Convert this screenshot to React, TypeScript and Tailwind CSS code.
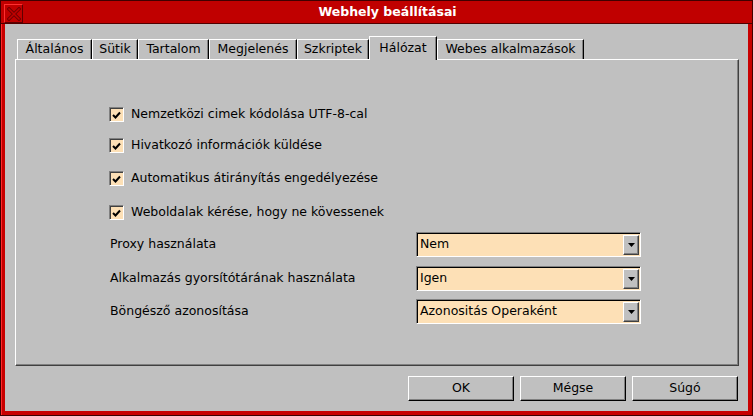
import React from 'react';

const tabs = [
  { label: 'Általános', w: 'w-[75px]' },
  { label: 'Sütik', w: 'w-[46px]' },
  { label: 'Tartalom', w: 'w-[71px]' },
  { label: 'Megjelenés', w: 'w-[88px]' },
  { label: 'Szkriptek', w: 'w-[72px]' },
  { label: 'Hálózat', w: 'w-[68px]', active: true },
  { label: 'Webes alkalmazások', w: 'w-[147px]' },
];

const checks = [
  { label: 'Nemzetközi cimek kódolása UTF-8-cal', mt: 'mt-0' },
  { label: 'Hivatkozó információk küldése', mt: 'mt-[16px]' },
  { label: 'Automatikus átirányítás engedélyezése', mt: 'mt-[18px]' },
  { label: 'Weboldalak kérése, hogy ne kövessenek', mt: 'mt-[19px]' },
];

const selects = [
  { label: 'Proxy használata', value: 'Nem', mt: 'mt-[12px]' },
  { label: 'Alkalmazás gyorsítótárának használata', value: 'Igen', mt: 'mt-[9px]' },
  { label: 'Böngésző azonosítása', value: 'Azonositás Operaként', mt: 'mt-[8px]' },
];

function CloseBox() {
  return (
    <div className="w-[19px] h-[19px] mt-[3px] ml-[3px] border border-t-[#ff3030] border-l-[#ff3030] border-b-[#600000] border-r-[#600000] flex items-center justify-center">
      <svg width={14} height={14} viewBox="0 0 14 14">
        <path d="M2 2 L12 12 M12 2 L2 12" stroke="#700000" strokeWidth={3.5} strokeLinecap="square" />
        <path d="M2 2 L12 12 M12 2 L2 12" stroke="#c00000" strokeWidth={1.5} strokeLinecap="square" />
      </svg>
    </div>
  );
}

function CheckBox() {
  return (
    <div className="w-[15px] h-[15px] bg-[#fde0b6] border border-t-[#808080] border-l-[#808080] border-b-white border-r-white shadow-[inset_1px_1px_0_#404040] flex items-center justify-center">
      <svg width={9} height={8} viewBox="0 0 9 8">
        <path d="M1 4 L3.5 6.5 L8 1.5" stroke="#000" strokeWidth={2} fill="none" />
      </svg>
    </div>
  );
}

function Select({ value }: { value: string }) {
  return (
    <div className="w-[225px] h-[25px] bg-[#fde0b6] border border-t-[#808080] border-l-[#808080] border-b-white border-r-white shadow-[inset_1px_1px_0_#000] flex items-center pl-[3px] pr-px">
      <span className="flex-1">{value}</span>
      <div className="w-[16px] h-[20px] mt-px bg-[#c0c0c0] border border-t-white border-l-white border-b-[#404040] border-r-[#404040] shadow-[inset_-1px_-1px_0_#808080] flex items-center justify-center">
        <svg width={7} height={4} viewBox="0 0 7 4">
          <polygon points="0,0 7,0 3.5,4" fill="#000" />
        </svg>
      </div>
    </div>
  );
}

export default function App() {
  return (
    <div className="w-[753px] h-[416px] bg-[#c80000] border border-[#400000] shadow-[inset_1px_1px_0_#ff2a2a] flex flex-col font-['DejaVu_Sans',sans-serif] text-[12.5px] text-black">
      {/* title bar */}
      <div className="h-[23px] flex border-b border-[#500000] bg-[#c00000]">
        <CloseBox />
        <div className="flex-1 text-center text-white font-bold leading-[22px]">Webhely beállításai</div>
      </div>

      <div className="flex-1 flex px-[4px] pb-[4px]">
        <div className="flex-1 flex flex-col bg-[#c0c0c0] pl-[10px] pr-[9px] pt-[12px] pb-[10px]">
          <div className="h-[23px] flex items-end pl-[2px]">
            {tabs.map((t) =>
              t.active ? (
                <div key={t.label} className={`${t.w} h-[24px] -mb-px relative z-10 bg-[#c0c0c0] border-l border-t border-white border-r border-r-black shadow-[inset_-1px_0_0_#808080] flex items-center justify-center`}>
                  {t.label}
                </div>
              ) : (
                <div key={t.label} className={`${t.w} h-[20px] bg-[#c0c0c0] border-l border-t border-white border-r border-r-black shadow-[inset_-1px_0_0_#808080] flex items-center justify-center`}>
                  {t.label}
                </div>
              )
            )}
          </div>

          <div className="flex-1 flex flex-col border-l border-t border-white border-r border-b border-r-[#404040] border-b-[#404040] shadow-[inset_-1px_-1px_0_#808080] pl-[93px] pt-[47px]">
            {checks.map((c) => (
              <div key={c.label} className={`${c.mt} flex items-center h-[15px] gap-[7px]`}>
                <CheckBox />
                <span>{c.label}</span>
              </div>
            ))}
            {selects.map((s) => (
              <div key={s.label} className={`${s.mt} flex items-center h-[25px]`}>
                <span className="w-[307px] pl-px">{s.label}</span>
                <Select value={s.value} />
              </div>
            ))}
          </div>

          <div className="mt-[10px] flex justify-end gap-[6px] pr-px">
            {['OK', 'Mégse', 'Súgó'].map((b) => (
              <div key={b} className="w-[106px] h-[25px] border border-t-white border-l-white border-b-black border-r-black shadow-[inset_-1px_-1px_0_#808080] flex items-center justify-center">
                {b}
              </div>
            ))}
          </div>
        </div>
      </div>
    </div>
  );
}
